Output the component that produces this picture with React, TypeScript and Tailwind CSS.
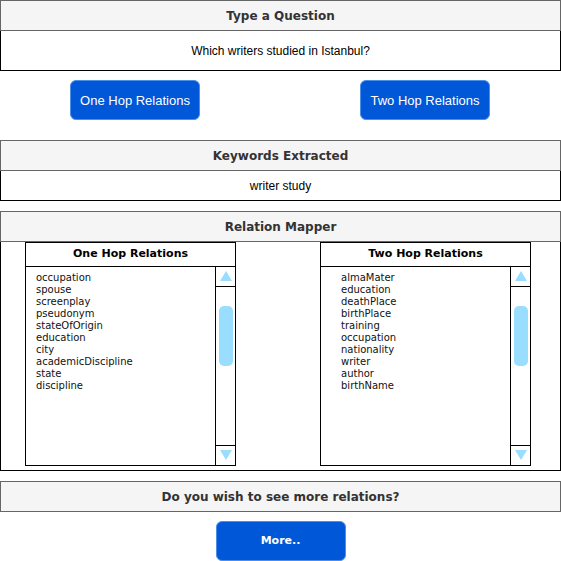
import React from "react";

const oneHop = ["occupation","spouse","screenplay","pseudonym","stateOfOrigin","education","city","academicDiscipline","state","discipline"];
const twoHop = ["almaMater","education","deathPlace","birthPlace","training","occupation","nationality","writer","author","birthName"];

function Header({ children }: { children: React.ReactNode }) {
  return (
    <div className="h-[31px] w-full border border-[#666666] bg-[#f5f5f5] flex items-center justify-center pt-[1px] text-[12px] font-bold text-[#333333] [font-family:'DejaVu_Sans',Verdana,sans-serif]">
      {children}
    </div>
  );
}

function Btn({ children, bold }: { children: React.ReactNode; bold?: boolean }) {
  return (
    <div
      className={
        "w-[130px] h-[40px] rounded-[6px] bg-[#0057d8] border border-[#4d8fe8] flex items-center justify-center pt-[1px] text-white " +
        (bold
          ? "text-[11px] font-bold [font-family:'DejaVu_Sans',Verdana,sans-serif]"
          : "text-[13px] [font-family:'Liberation_Sans',Arial,sans-serif]")
      }
    >
      {children}
    </div>
  );
}

function ListBox({ title, items, indent }: { title: string; items: string[]; indent: string }) {
  return (
    <div className="w-[211px] h-[224px] border border-black flex flex-col bg-white">
      <div className="h-[24px] border-b border-black flex items-center justify-center pt-[1px] text-[11px] font-bold text-black [font-family:'DejaVu_Sans',Verdana,sans-serif]">
        {title}
      </div>
      <div className="flex-1 flex">
        <div className={"flex-1 pt-[5px] text-[10px] leading-[12px] text-[#111] [font-family:'DejaVu_Sans',Verdana,sans-serif] " + indent}>
          {items.map((t, i) => (
            <div key={i}>{t}</div>
          ))}
        </div>
        <div className="w-[20px] border-l border-black flex flex-col">
          <div className="h-[20px] border-b border-black flex items-center justify-center">
            <svg width="12" height="10" viewBox="0 0 12 10"><polygon points="6,0 12,10 0,10" fill="#99ddff" /></svg>
          </div>
          <div className="flex-1 flex justify-center pt-[19px]">
            <div className="w-[14px] h-[60px] rounded-[5px] bg-[#99ddff]" />
          </div>
          <div className="h-[20px] border-t border-black flex items-center justify-center">
            <svg width="12" height="10" viewBox="0 0 12 10"><polygon points="0,0 12,0 6,10" fill="#99ddff" /></svg>
          </div>
        </div>
      </div>
    </div>
  );
}

export default function App() {
  return (
    <div className="w-[561px] h-[561px] bg-white flex flex-col overflow-hidden">
      <Header>Type a Question</Header>
      <div className="h-[40px] border border-t-0 border-black flex items-center justify-center pt-[1px] text-[12px] text-black [font-family:'Liberation_Sans',Arial,sans-serif]">
        Which writers studied in Istanbul?
      </div>
      <div className="flex mt-[9px] pl-[70px] gap-[160px]">
        <Btn>One Hop Relations</Btn>
        <Btn>Two Hop Relations</Btn>
      </div>
      <div className="mt-[20px]">
        <Header>Keywords Extracted</Header>
      </div>
      <div className="h-[30px] border border-t-0 border-black flex items-center justify-center pt-[1px] text-[12px] text-black [font-family:'Liberation_Sans',Arial,sans-serif]">
        writer study
      </div>
      <div className="mt-[10px]">
        <Header>Relation Mapper</Header>
      </div>
      <div className="h-[230px] border border-t-0 border-black flex pl-[24px] gap-[84px]">
        <ListBox title="One Hop Relations" items={oneHop} indent="pl-[10px]" />
        <ListBox title="Two Hop Relations" items={twoHop} indent="pl-[20px]" />
      </div>
      <div className="mt-[10px]">
        <Header>Do you wish to see more relations?</Header>
      </div>
      <div className="flex justify-center mt-[9px]">
        <Btn bold>More..</Btn>
      </div>
    </div>
  );
}
